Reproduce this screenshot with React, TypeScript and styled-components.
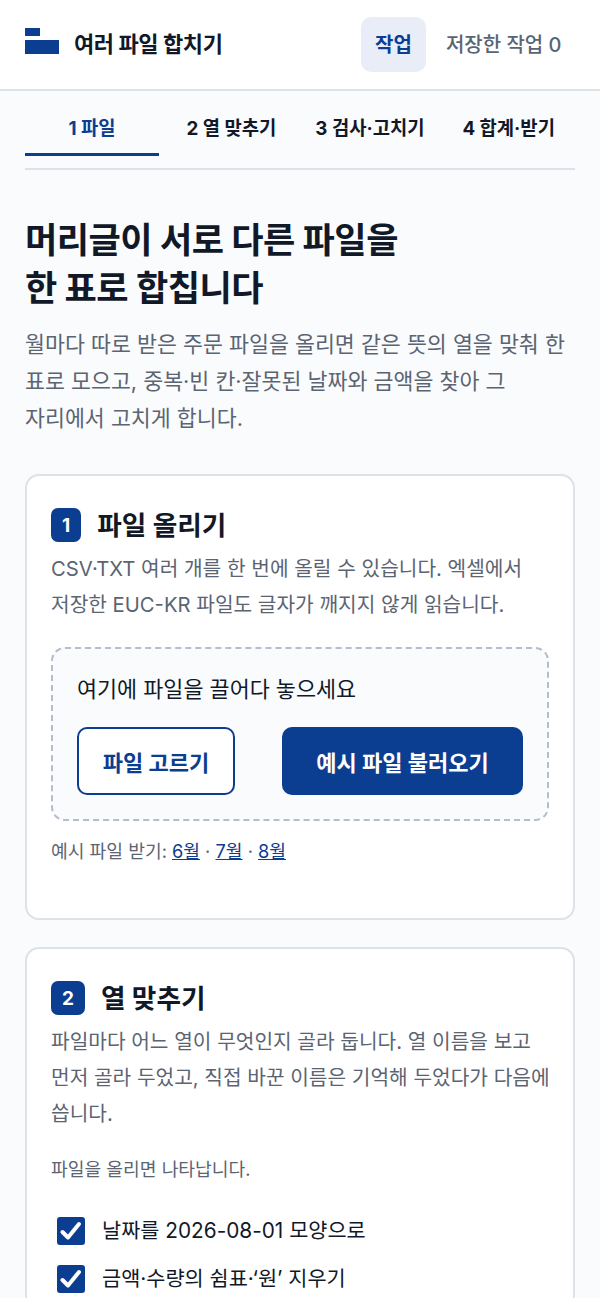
import React from 'react';
import styled, { createGlobalStyle } from 'styled-components';

const tabs = ['1 파일', '2 열 맞추기', '3 검사·고치기', '4 합계·받기'];

const Check = () => (
  <svg width="28" height="28" viewBox="0 0 28 28" fill="none">
    <path d="M5.5 15L11 20.5L22 7" stroke="#fff" strokeWidth="4" strokeLinecap="round" strokeLinejoin="round" />
  </svg>
);

const App: React.FC = () => {
  return (
    <>
      <GlobalStyle />
      <Header>
        <Brand>
          <Logo>
            <LogoTop />
            <LogoBottom />
          </Logo>
          <BrandName>여러 파일 합치기</BrandName>
        </Brand>
        <Nav>
          <NavItem $active>작업</NavItem>
          <NavItem>저장한 작업 0</NavItem>
        </Nav>
      </Header>
      <Main>
        <TabBar>
          {tabs.map((tab, i) => (
            <Tab key={tab} $active={i === 0}>{tab}</Tab>
          ))}
        </TabBar>
        <Hero>
          <Title>머리글이 서로 다른 파일을<br />한 표로 합칩니다</Title>
          <Lead>월마다 따로 받은 주문 파일을 올리면 같은 뜻의 열을 맞춰 한 표로 모으고, 중복·빈 칸·잘못된 날짜와 금액을 찾아 그 자리에서 고치게 합니다.</Lead>
        </Hero>
        <Card>
          <CardHead>
            <StepBadge>1</StepBadge>
            <CardTitle>파일 올리기</CardTitle>
          </CardHead>
          <CardText>CSV·TXT 여러 개를 한 번에 올릴 수 있습니다. 엑셀에서 저장한 EUC-KR 파일도 글자가 깨지지 않게 읽습니다.</CardText>
          <DropZone>
            <DropLabel>여기에 파일을 끌어다 놓으세요</DropLabel>
            <DropActions>
              <OutlineButton>파일 고르기</OutlineButton>
              <PrimaryButton>예시 파일 불러오기</PrimaryButton>
            </DropActions>
          </DropZone>
          <Samples>
            예시 파일 받기: <SampleLink href="#">6월</SampleLink> · <SampleLink href="#">7월</SampleLink> · <SampleLink href="#">8월</SampleLink>
          </Samples>
        </Card>
        <Card>
          <CardHead>
            <StepBadge>2</StepBadge>
            <CardTitle>열 맞추기</CardTitle>
          </CardHead>
          <CardText>파일마다 어느 열이 무엇인지 골라 둡니다. 열 이름을 보고 먼저 골라 두었고, 직접 바꾼 이름은 기억해 두었다가 다음에 씁니다.</CardText>
          <Hint>파일을 올리면 나타납니다.</Hint>
          <Options>
            <Option><CheckBox><Check /></CheckBox>날짜를 2026-08-01 모양으로</Option>
            <Option><CheckBox><Check /></CheckBox>금액·수량의 쉼표·‘원’ 지우기</Option>
          </Options>
        </Card>
      </Main>
    </>
  );
};

const GlobalStyle = createGlobalStyle`
  * {
    box-sizing: border-box;
  }

  html, body {
    margin: 0;
    height: 1298px;
    overflow: hidden;
    background: #f9fbfd;
    color: #111827;
    font-family: Inter, "Noto Sans CJK KR", "Liberation Sans", sans-serif;
    word-break: keep-all;
  }
`;

const Header = styled.header`
  height: 91px;
  padding: 0 25px;
  display: flex;
  align-items: center;
  justify-content: space-between;
  background: #fff;
  border-bottom: 2px solid #dde1e8;
`;

const Brand = styled.div`
  display: flex;
  align-items: center;
  gap: 15px;
`;

const Logo = styled.div`
  width: 34px;
  margin-bottom: 7px;
  display: flex;
  flex-direction: column;
  gap: 4px;
`;

const LogoTop = styled.div`
  width: 15px;
  height: 8px;
  background: #0b3d91;
`;

const LogoBottom = styled.div`
  width: 34px;
  height: 14px;
  background: #0b3d91;
`;

const BrandName = styled.div`
  padding-bottom: 5px;
  font-size: 22px;
  font-weight: 700;
  letter-spacing: -0.4px;
  color: #111827;
`;

const Nav = styled.nav`
  display: flex;
  align-items: center;
  gap: 5px;
  margin-right: -1px;
`;

const NavItem = styled.div<{ $active?: boolean }>`
  height: 55px;
  padding: 0 14.5px 2px;
  display: flex;
  align-items: center;
  border-radius: 10px;
  font-size: 20px;
  font-weight: ${(p) => (p.$active ? 700 : 500)};
  color: ${(p) => (p.$active ? '#0b3d91' : '#5b6472')};
  background: ${(p) => (p.$active ? '#e8edf8' : 'transparent')};
`;

const Main = styled.main`
  padding: 0 25px;
`;

const TabBar = styled.div`
  display: grid;
  grid-template-columns: 134px repeat(3, 1fr);
  gap: 6px;
  height: 79px;
  border-bottom: 2px solid #dde1e8;
`;

const Tab = styled.div<{ $active?: boolean }>`
  height: 65px;
  padding-top: 8px;
  display: flex;
  align-items: center;
  justify-content: center;
  white-space: nowrap;
  font-size: 18.8px;
  font-weight: 700;
  color: ${(p) => (p.$active ? '#0b3d91' : '#111827')};
  border-bottom: 3px solid ${(p) => (p.$active ? '#0b3d91' : 'transparent')};
`;

const Hero = styled.section`
  padding-top: 46px;
  margin-bottom: 37px;
`;

const Title = styled.h1`
  margin: 0 0 14px;
  font-size: 35.1px;
  line-height: 48px;
  font-weight: 700;
  letter-spacing: -0.5px;
  color: #111827;
`;

const Lead = styled.p`
  margin: 0;
  font-size: 21.7px;
  line-height: 37px;
  color: #5b6472;
`;

const Card = styled.section`
  margin-bottom: 27px;
  padding: 31px 24px 49px;
  background: #fff;
  border: 2px solid #dde1e8;
  border-radius: 14px;
`;

const CardHead = styled.div`
  display: flex;
  align-items: center;
  gap: 16px;
  margin-bottom: 8px;
`;

const StepBadge = styled.div`
  height: 34px;
  padding: 0 11px;
  display: flex;
  align-items: center;
  justify-content: center;
  border-radius: 7px;
  background: #0b3d91;
  color: #fff;
  font-size: 19px;
  font-weight: 700;
`;

const CardTitle = styled.h2`
  margin: 0;
  font-size: 26.7px;
  line-height: 36px;
  font-weight: 700;
  color: #111827;
`;

const CardText = styled.p`
  margin: 0 -2px 0 0;
  font-size: 20.25px;
  line-height: 36px;
  color: #5b6472;
`;

const DropZone = styled.div`
  margin-top: 24px;
  padding: 22px 24px 24px;
  background: #f9fbfd;
  border: 2px dashed #b4bccd;
  border-radius: 14px;
`;

const DropLabel = styled.div`
  font-size: 21.8px;
  line-height: 36px;
  color: #111827;
`;

const DropActions = styled.div`
  display: flex;
  justify-content: space-between;
  margin-top: 20px;
`;

const OutlineButton = styled.button`
  width: 158px;
  height: 68px;
  border: 2px solid #0b3d91;
  border-radius: 10px;
  background: #fff;
  color: #0b3d91;
  font: inherit;
  font-size: 22px;
  font-weight: 700;
`;

const PrimaryButton = styled.button`
  width: 241px;
  height: 68px;
  border: 0;
  border-radius: 10px;
  background: #0b3d91;
  color: #fff;
  font: inherit;
  font-size: 22px;
  font-weight: 700;
`;

const Samples = styled.div`
  margin-top: 12px;
  font-size: 18.2px;
  line-height: 36px;
  color: #5b6472;
`;

const SampleLink = styled.a`
  color: #0b3d91;
  text-decoration: underline;
`;

const Hint = styled.div`
  margin-top: 21px;
  font-size: 18.2px;
  line-height: 32px;
  color: #5b6472;
`;

const Options = styled.div`
  margin-top: 32px;
  padding-left: 6px;
  display: flex;
  flex-direction: column;
  gap: 20px;
`;

const Option = styled.label`
  display: flex;
  align-items: center;
  gap: 17px;
  font-size: 20.8px;
  line-height: 28px;
  color: #111827;
`;

const CheckBox = styled.span`
  width: 28px;
  height: 28px;
  display: flex;
  align-items: center;
  justify-content: center;
  border-radius: 3px;
  background: #0b3d91;
`;

export default App;
